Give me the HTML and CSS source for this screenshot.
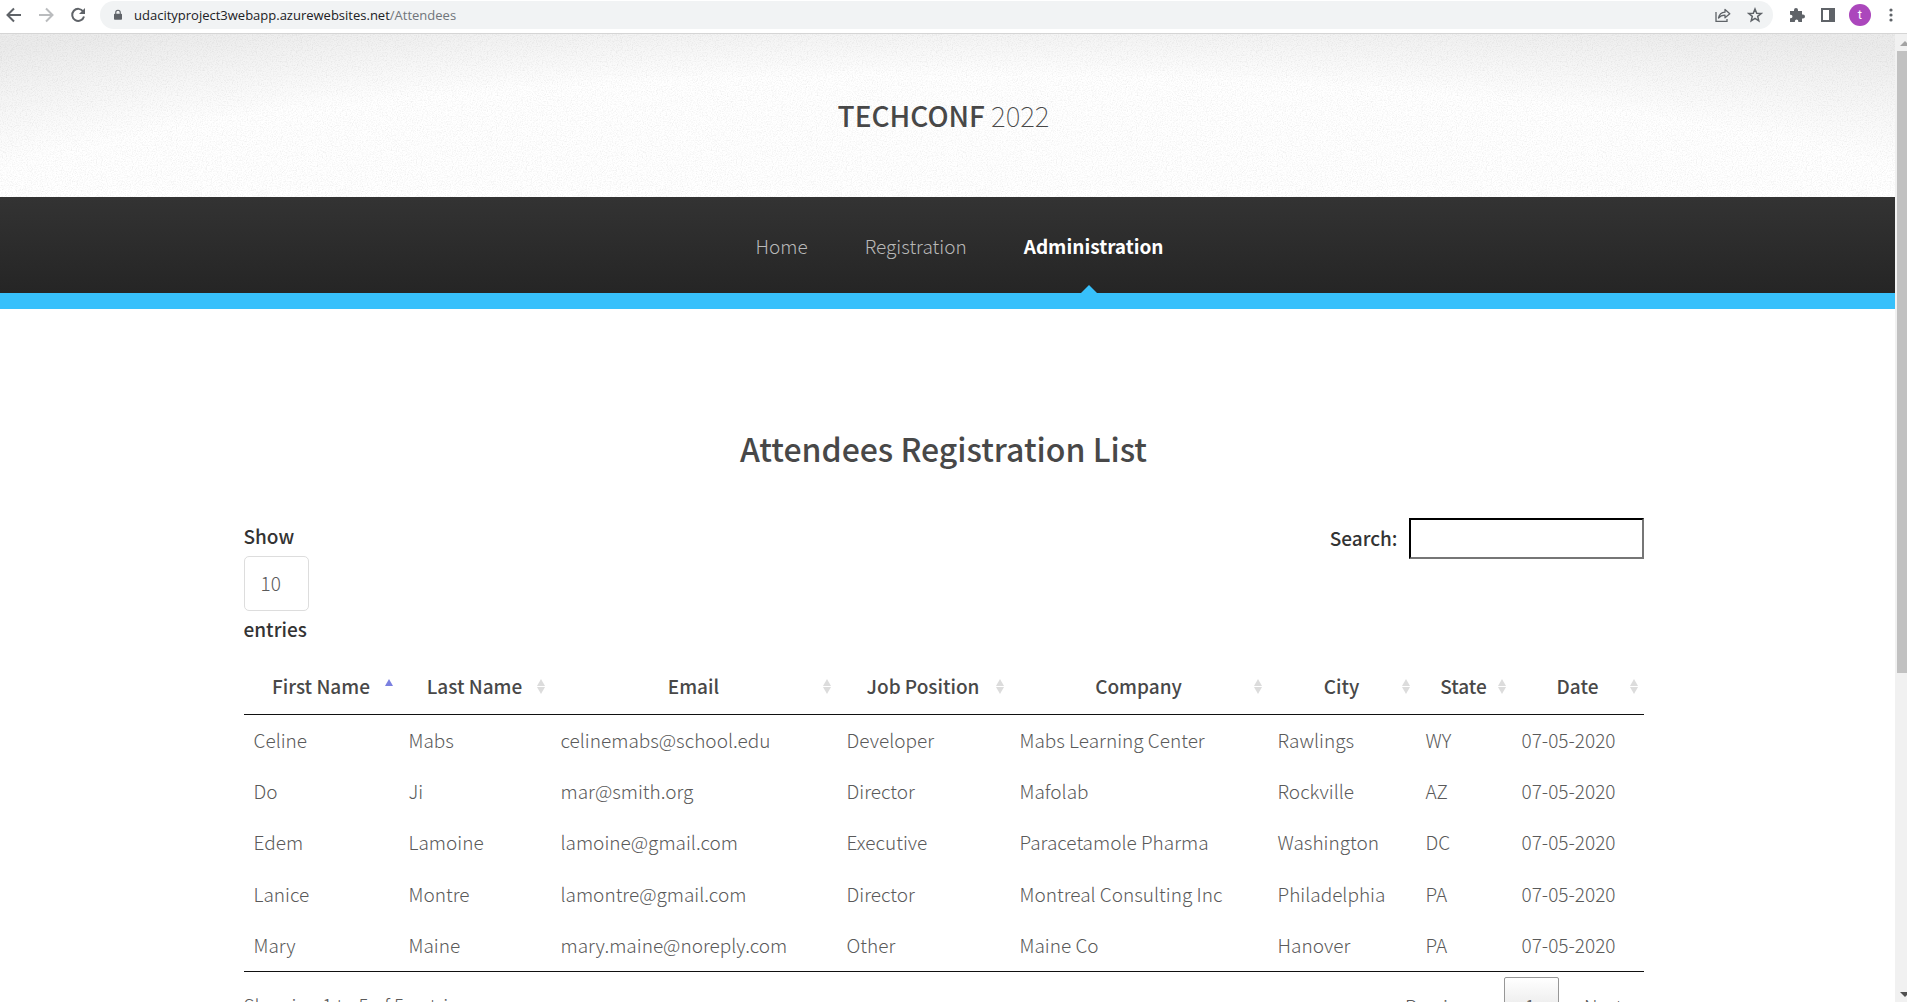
FILE: index.html
```html
<!DOCTYPE html>
<html lang="en">
<head>
<meta charset="utf-8">
<title>TechConf 2022 - Attendees</title>
<link rel="stylesheet" href="styles.css">
</head>
<body>
<div class="toolbar">
  <button class="tool" aria-label="Back"><svg width="16" height="16" viewBox="0 0 16 16" fill="none" stroke="#5f6368" stroke-width="2"><path d="M15 8H2M8 1.500 1.500 8 8 14.500"/></svg></button>
  <button class="tool" aria-label="Forward"><svg width="16" height="16" viewBox="0 0 16 16" fill="none" stroke="#babcbe" stroke-width="2"><path d="M1 8h13M8 1.500 14.500 8 8 14.500"/></svg></button>
  <button class="tool" aria-label="Reload"><svg width="16" height="16" viewBox="0 0 16 16" fill="none" stroke="#5f6368" stroke-width="2"><path d="M13.200 4.500A6 6 0 1 0 14 9.500"/><path d="M15 1v6H9z" fill="#5f6368" stroke="none"/></svg></button>
  <div class="address">
    <svg width="8" height="12" viewBox="0 0 10 14"><path d="M1 5.500h8a1 1 0 0 1 1 1V12a1 1 0 0 1-1 1H1a1 1 0 0 1-1-1V6.500a1 1 0 0 1 1-1z" fill="#5f6368"/><path d="M2.200 6V3.800a2.800 2.800 0 0 1 5.600 0V6" fill="none" stroke="#5f6368" stroke-width="1.400"/></svg>
    <span class="url">udacityproject3webapp.azurewebsites.net<span class="path">/Attendees</span></span>
    <button class="tool" aria-label="Share"><svg width="16" height="16" viewBox="0 0 16 16" fill="none" stroke="#5f6368" stroke-width="1.300"><path d="M1 5v9.300h11V12"/><path d="M3.500 11C4.200 7.500 6 5.500 10 5.200V2.500l4.800 4.300L10 10.800V8.200c-3 0-5 .8-6.500 2.800z" stroke-linejoin="round"/></svg></button>
    <button class="tool" aria-label="Bookmark"><svg width="16" height="16" viewBox="0 0 16 16" fill="none" stroke="#5f6368" stroke-width="1.500"><path d="M8 2l1.700 4.200 4.500.3-3.500 2.900 1.100 4.400L8 11.400l-3.800 2.400 1.100-4.400L1.800 6.500l4.500-.3z"/></svg></button>
  </div>
  <button class="tool" aria-label="Extensions"><svg width="16" height="16" viewBox="0 0 16 16" fill="#5f6368"><path d="M1 4h4V3a2 2 0 0 1 4 0v1h4v3.500h1a2 2 0 0 1 0 4h-1V15H9.300v-.8a1.700 1.700 0 0 0-3.400 0v.8H1v-3.800h.8a1.700 1.700 0 0 0 0-3.400H1z"/></svg></button>
  <button class="tool" aria-label="Side panel"><svg width="14" height="14" viewBox="0 0 14 14"><path d="M0 0h14v14H0zM2 2v10h6V2z" fill="#5f6368" fill-rule="evenodd"/></svg></button>
  <button class="avatar" aria-label="Profile">t</button>
  <button class="tool" aria-label="Menu"><svg width="4" height="14" viewBox="0 0 4 14" fill="#5f6368"><circle cx="2" cy="2" r="1.600"/><circle cx="2" cy="7" r="1.600"/><circle cx="2" cy="12" r="1.600"/></svg></button>
</div>
<div class="window">
  <div class="page">
    <header class="banner">
      <svg class="grain" aria-hidden="true"><filter id="grain" x="0" y="0" width="100%" height="100%"><feTurbulence type="fractalNoise" baseFrequency="0.8" numOctaves="2"/><feColorMatrix values="0 0 0 0 0  0 0 0 0 0  0 0 0 0 0  .1 .1 0 0 -.09"/></filter><rect width="100%" height="100%" filter="url(#grain)"/></svg>
      <h1><strong>TECHCONF</strong> 2022</h1>
    </header>
    <nav class="nav">
      <a href="#">Home</a>
      <a href="#">Registration</a>
      <a href="#" class="current">Administration</a>
    </nav>
    <main>
      <h2>Attendees Registration List</h2>
      <div class="controls">
        <div class="length">
          <label for="length">Show</label>
          <select id="length"><option>10</option><option>25</option></select>
          <span>entries</span>
        </div>
        <div class="search">
          <label for="search">Search:</label>
          <input id="search" type="search">
        </div>
      </div>
      <table>
        <colgroup><col class="c-first"><col class="c-last"><col class="c-email"><col class="c-job"><col class="c-company"><col class="c-city"><col class="c-state"><col class="c-date"></colgroup>
        <thead><tr><th class="asc">First Name</th><th>Last Name</th><th>Email</th><th>Job Position</th><th>Company</th><th>City</th><th>State</th><th>Date</th></tr></thead>
        <tbody>
          <tr><td>Celine</td><td>Mabs</td><td>celinemabs@school.edu</td><td>Developer</td><td>Mabs Learning Center</td><td>Rawlings</td><td>WY</td><td>07-05-2020</td></tr>
          <tr><td>Do</td><td>Ji</td><td>mar@smith.org</td><td>Director</td><td>Mafolab</td><td>Rockville</td><td>AZ</td><td>07-05-2020</td></tr>
          <tr><td>Edem</td><td>Lamoine</td><td>lamoine@gmail.com</td><td>Executive</td><td>Paracetamole Pharma</td><td>Washington</td><td>DC</td><td>07-05-2020</td></tr>
          <tr><td>Lanice</td><td>Montre</td><td>lamontre@gmail.com</td><td>Director</td><td>Montreal Consulting Inc</td><td>Philadelphia</td><td>PA</td><td>07-05-2020</td></tr>
          <tr><td>Mary</td><td>Maine</td><td>mary.maine@noreply.com</td><td>Other</td><td>Maine Co</td><td>Hanover</td><td>PA</td><td>07-05-2020</td></tr>
        </tbody>
      </table>
      <div class="footer">
        <span>Showing 1 to 5 of 5 entries</span>
        <div class="pager"><button>Previous</button><button class="active">1</button><button>Next</button></div>
      </div>
    </main>
  </div>
  <div class="scrollbar">
    <svg width="10" height="5" viewBox="0 0 10 5"><path d="M0 5 5 0l5 5z" fill="#a3a3a3"/></svg>
    <div class="thumb"></div>
    <svg width="10" height="5" viewBox="0 0 10 5"><path d="M0 0h10L5 5z" fill="#505050"/></svg>
  </div>
</div>
</body>
</html>
```
FILE: styles.css
```css
* { box-sizing: border-box; }

body {
  margin: 0;
  height: 100vh;
  display: flex;
  flex-direction: column;
  overflow: hidden;
  background: #fff;
  color: #484848;
  font: 300 19px/30px "Noto Sans CJK SC", "Noto Sans", sans-serif;
}

button { border: 0; padding: 0; background: none; font: inherit; color: inherit; }

/* Browser toolbar */
.toolbar {
  flex: none;
  display: flex;
  align-items: center;
  gap: 16px;
  height: 34px;
  padding: 0 14px 4px 6px;
  border-bottom: 1px solid #d5d5d5;
}
.tool { display: flex; }
.address {
  flex: 1;
  display: flex;
  align-items: center;
  gap: 16px;
  height: 28px;
  margin-left: -2px;
  padding: 0 10px 0 14px;
  border-radius: 14px;
  background: #f1f3f4;
}
.address > svg { margin-right: -4px; }
.url { flex: 1; font: 400 13px/20px "Open Sans", sans-serif; color: #202124; }
.path { color: #70757a; }
.avatar {
  width: 22px;
  height: 22px;
  margin: 0 2px 0 -2px;
  border-radius: 50%;
  background: #ab47bc;
  color: #fff;
  font: 400 13px/20px Roboto, sans-serif;
}

.window { flex: 1; min-height: 0; display: flex; }
.page { flex: 1; min-width: 0; overflow: hidden; }

/* Scrollbar */
.scrollbar {
  flex: none;
  width: 12px;
  display: flex;
  flex-direction: column;
  gap: 5px;
  padding: 7px 0 5px 2px;
  background: #f1f1f1;
  overflow: hidden;
}
.scrollbar svg { flex: none; margin-left: 3px; }
.thumb { height: 622px; background: #c1c1c1; margin-bottom: auto; }

/* Site header */
.banner {
  position: relative;
  display: flex;
  align-items: center;
  justify-content: center;
  height: 163px;
  padding: 0 8px 2px 0;
  background: radial-gradient(ellipse 80% 130% at 50% 110%, #fff 65%, #ebebeb 100%);
}
.grain { position: absolute; inset: 0; width: 100%; height: 100%; }
h1 { position: relative; margin: 0; font-size: 28px; line-height: 40px; font-weight: 100; }
h1 strong { font-weight: 500; }

.nav {
  display: flex;
  justify-content: center;
  gap: 57px;
  padding-left: 24px;
  background: linear-gradient(#333, #252525);
  border-bottom: 16px solid #37c0fb;
}
.nav a { position: relative; line-height: 32px; padding: 33px 0 31px; color: #b8b8b8; text-decoration: none; }
.nav .current { color: #fff; font-weight: 700; }
.nav .current::after {
  content: "";
  position: absolute;
  left: 50%;
  bottom: 0;
  margin-left: -13px;
  border: 8px solid transparent;
  border-top: 0;
  border-bottom-color: #37c0fb;
}

/* Attendees list */
main { max-width: 1400px; margin: 0 auto; position: relative; right: 4px; }
h2 { margin: 0; padding: 114px 0 44px; font-size: 32px; line-height: 50px; font-weight: 500; text-align: center; }
.controls { display: flex; justify-content: space-between; align-items: flex-start; color: #333; font-weight: 500; }
.length { display: flex; flex-direction: column; align-items: flex-start; padding-top: 4px; }
select {
  appearance: none;
  width: 65px;
  height: 55px;
  margin: 5px 0 3px;
  padding: 0 16px 2px;
  border: 1px solid #ddd;
  border-radius: 5px;
  background: #fff;
  color: #5a5a5a;
  font: inherit;
  font-weight: 300;
}
.search { display: flex; align-items: center; gap: 11px; padding-top: 1px; }
.search label { padding-bottom: 2px; }
.search input { width: 235px; height: 41px; padding: 4px; border: 2px inset #767676; border-color: #222 #767676 #767676 #222; font: inherit; appearance: none; }

table { width: 100%; table-layout: fixed; border-collapse: separate; border-spacing: 0; border-bottom: 1px solid #111; margin-top: 16px; }
.c-first { width: 155px; }
.c-last { width: 152px; }
.c-email { width: 286px; }
.c-job { width: 173px; }
.c-company { width: 258px; }
.c-city { width: 148px; }
.c-state { width: 96px; }
.c-date { width: 132px; }
th { position: relative; height: 55px; padding: 0 18px 2px; border-bottom: 1px solid #111; font-weight: 500; white-space: nowrap; }
th::before, th::after { content: ""; position: absolute; right: 6px; border: 4px solid transparent; }
th::before { top: 19px; border-width: 0 4px 7px; border-bottom-color: #dcdcdc; }
th::after { top: 27px; border-width: 7px 4px 0; border-top-color: #dcdcdc; }
th.asc::before { border-bottom-color: #7b80e0; }
th.asc::after { display: none; }
td { height: 51px; padding: 0 10px 2px; color: #5a5a5a; white-space: nowrap; }
tbody tr:nth-child(3) td { height: 52px; }

.footer { display: flex; justify-content: space-between; align-items: flex-start; padding-top: 5px; color: #5a5a5a; }
.footer span { padding-top: 13px; }
.pager { display: flex; gap: 4px; }
.pager button { display: flex; height: 55px; padding: 13px 20px 0; border: 1px solid transparent; border-radius: 2px; }
.pager .active { width: 55px; border-color: #979797; background: linear-gradient(#fff, #dcdcdc); }
```
